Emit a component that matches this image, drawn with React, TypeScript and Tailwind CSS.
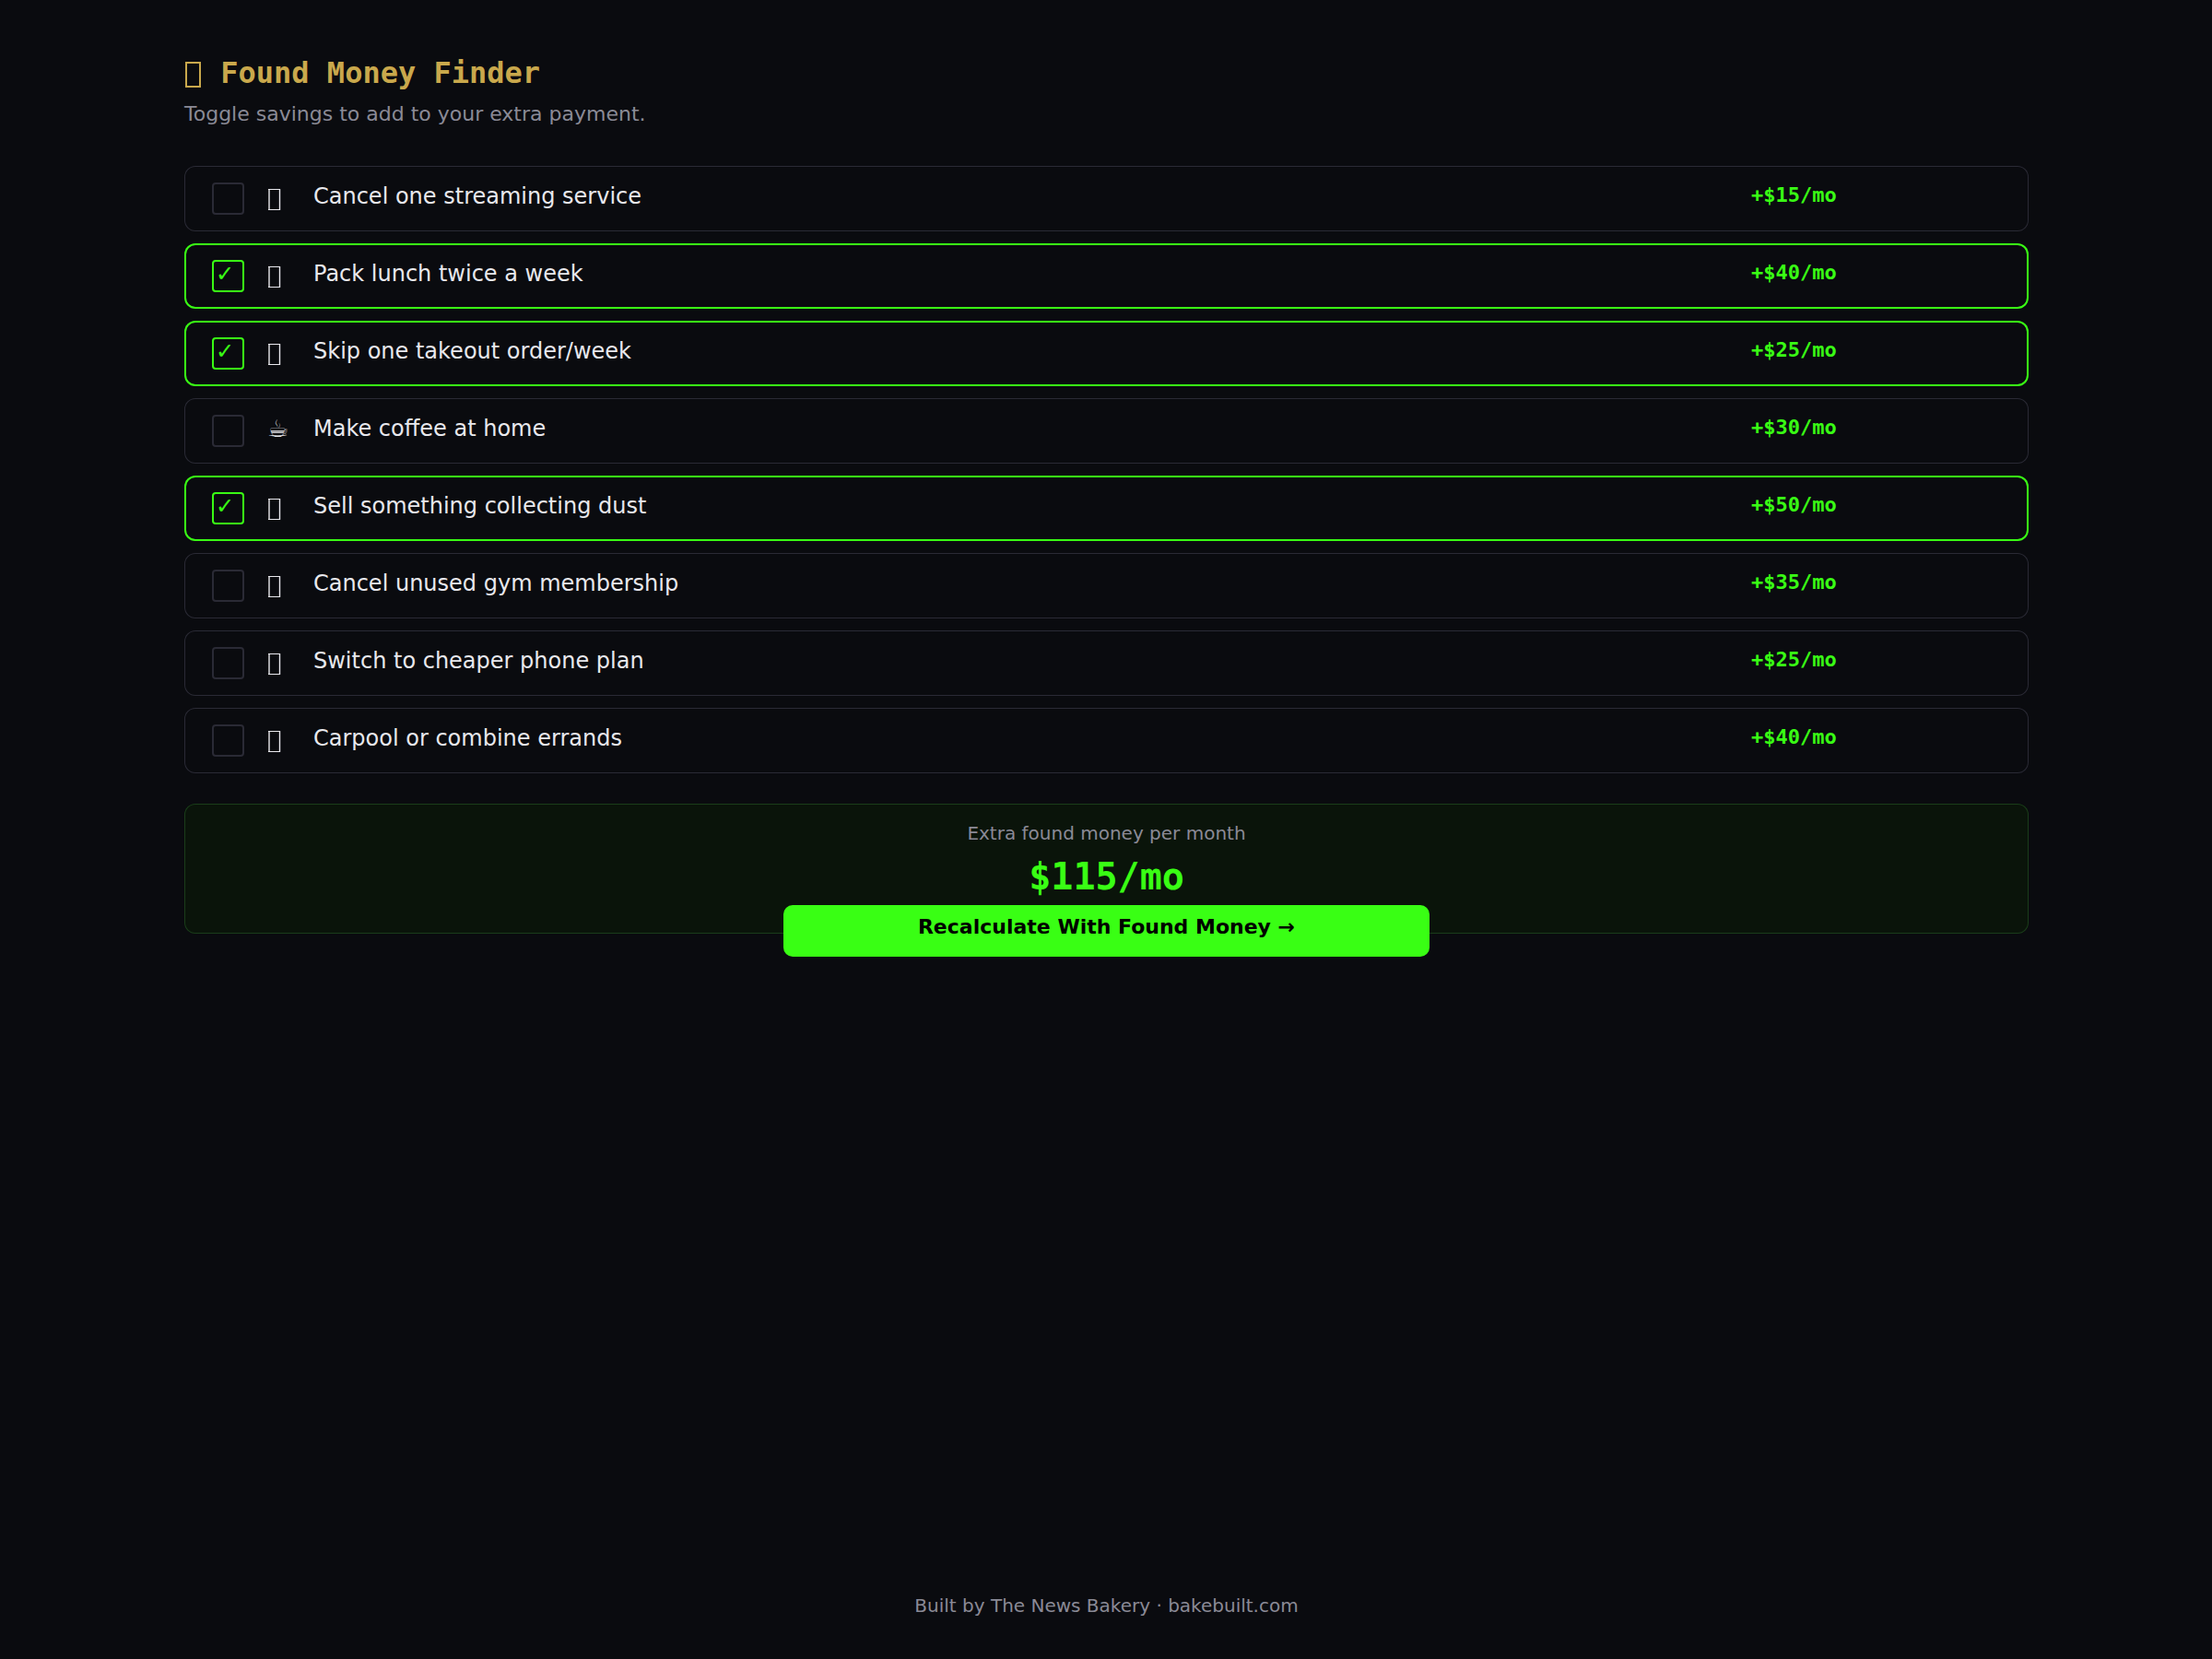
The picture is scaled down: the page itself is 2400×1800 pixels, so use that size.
import { useMemo, useState } from "react";
import { clsx } from "clsx";

type Saving = {
	id: string;
	label: string;
	amount: number;
	icon?: string;
};

const SAVINGS: Saving[] = [
	{ id: "streaming", label: "Cancel one streaming service", amount: 15 },
	{ id: "lunch", label: "Pack lunch twice a week", amount: 40 },
	{ id: "takeout", label: "Skip one takeout order/week", amount: 25 },
	{ id: "coffee", label: "Make coffee at home", amount: 30, icon: "☕" },
	{ id: "sell", label: "Sell something collecting dust", amount: 50 },
	{ id: "gym", label: "Cancel unused gym membership", amount: 35 },
	{ id: "phone", label: "Switch to cheaper phone plan", amount: 25 },
	{ id: "carpool", label: "Carpool or combine errands", amount: 40 },
];

// Outlined box used where an item has no symbol of its own
function BoxIcon() {
	return (
		<svg
			width="15"
			height="23"
			viewBox="0 0 15 23"
			fill="none"
			className="mt-[7px] block"
			aria-hidden="true"
		>
			<path d="M1 0.5H14M1 22.5H14M13.5 0V23" stroke="currentColor" />
			<path
				d="M2 0V23"
				stroke="currentColor"
				strokeWidth="2"
				strokeOpacity="0.7"
			/>
			<path d="M12.5 1V22M14.5 0V23" stroke="currentColor" strokeOpacity="0.2" />
		</svg>
	);
}

function SavingRow({
	saving,
	checked,
	onToggle,
}: {
	saving: Saving;
	checked: boolean;
	onToggle: (id: string) => void;
}) {
	return (
		<label
			className={clsx(
				"flex cursor-pointer items-start rounded-xl py-[18px] pl-[30px]",
				checked
					? "inset-ring-2 inset-ring-[#39ff14]"
					: "inset-ring inset-ring-[#2a2a35]",
			)}
		>
			<span className="relative mr-[25px] block size-[35px]">
				<input
					type="checkbox"
					checked={checked}
					onChange={() => onToggle(saving.id)}
					className="block size-full cursor-pointer appearance-none rounded border-2 border-[#2a2a35] checked:border-[#39ff14]"
				/>
				{checked && (
					<span className="pointer-events-none absolute left-1 top-0 text-[24px] leading-[30px] text-[#39ff14]">
						✓
					</span>
				)}
			</span>
			<span className="block h-[35px] w-[50px] text-[26px] leading-[30px]">
				{saving.icon ?? <BoxIcon />}
			</span>
			<span className="flex-1 text-[24px] leading-[30px]">{saving.label}</span>
			<span className="w-[301px] font-['DejaVu_Sans_Mono',monospace] text-[22px] font-bold leading-7 text-[#39ff14]">
				+${saving.amount}/mo
			</span>
		</label>
	);
}

export default function App() {
	const [selected, setSelected] = useState<string[]>([
		"lunch",
		"takeout",
		"sell",
	]);

	const total = useMemo(
		() =>
			SAVINGS.filter((s) => selected.includes(s.id)).reduce(
				(sum, s) => sum + s.amount,
				0,
			),
		[selected],
	);

	const handleToggle = (id: string) => {
		setSelected((prev) =>
			prev.includes(id) ? prev.filter((x) => x !== id) : [...prev, id],
		);
	};

	return (
		<div className="flex min-h-screen flex-col bg-[#0a0b0f] pb-11 pl-[200px] pr-[199px] pt-[59px] font-['DejaVu_Sans',sans-serif] text-[#e8e8ed]">
			<header>
				<h1 className="flex items-start whitespace-pre font-['DejaVu_Sans_Mono',monospace] text-[32px] font-bold leading-10 text-[#c9a84c]">
					<svg
						width="20"
						height="28"
						viewBox="0 0 20 28"
						fill="none"
						className="mt-2 block"
						aria-hidden="true"
					>
						<rect
							x="2"
							y="1"
							width="15"
							height="26"
							stroke="currentColor"
							strokeWidth="2"
						/>
					</svg>
					{" Found Money Finder"}
				</h1>
				<p className="mt-[11px] text-[22px] leading-7 text-[#8a8a96]">
					Toggle savings to add to your extra payment.
				</p>
			</header>

			<main className="mt-[42px]">
				<div className="flex flex-col gap-[13px]">
					{SAVINGS.map((saving) => (
						<SavingRow
							key={saving.id}
							saving={saving}
							checked={selected.includes(saving.id)}
							onToggle={handleToggle}
						/>
					))}
				</div>

				{/* The button hangs over the lower edge of the panel */}
				<section className="mt-[33px] flex flex-col items-center rounded-xl bg-[#0a140a] pt-[18px] text-center inset-ring inset-ring-[#1a3d1a]">
					<p className="text-[20px] leading-7 text-[#8a8a96]">
						Extra found money per month
					</p>
					<p className="mt-[9px] font-['DejaVu_Sans_Mono',monospace] text-[40px] font-bold leading-[48px] text-[#39ff14]">
						${total}/mo
					</p>
					<button
						type="button"
						className="-mb-[25px] mt-[7px] w-[35%] cursor-pointer rounded-[10px] bg-[#39ff14] pb-[18px] pt-[10px] text-[22px] font-bold leading-7 text-black"
					>
						Recalculate With Found Money →
					</button>
				</section>
			</main>

			<footer className="mt-auto text-center text-[20px] leading-7 text-[#8a8a96]">
				Built by The News Bakery · bakebuilt.com
			</footer>
		</div>
	);
}
